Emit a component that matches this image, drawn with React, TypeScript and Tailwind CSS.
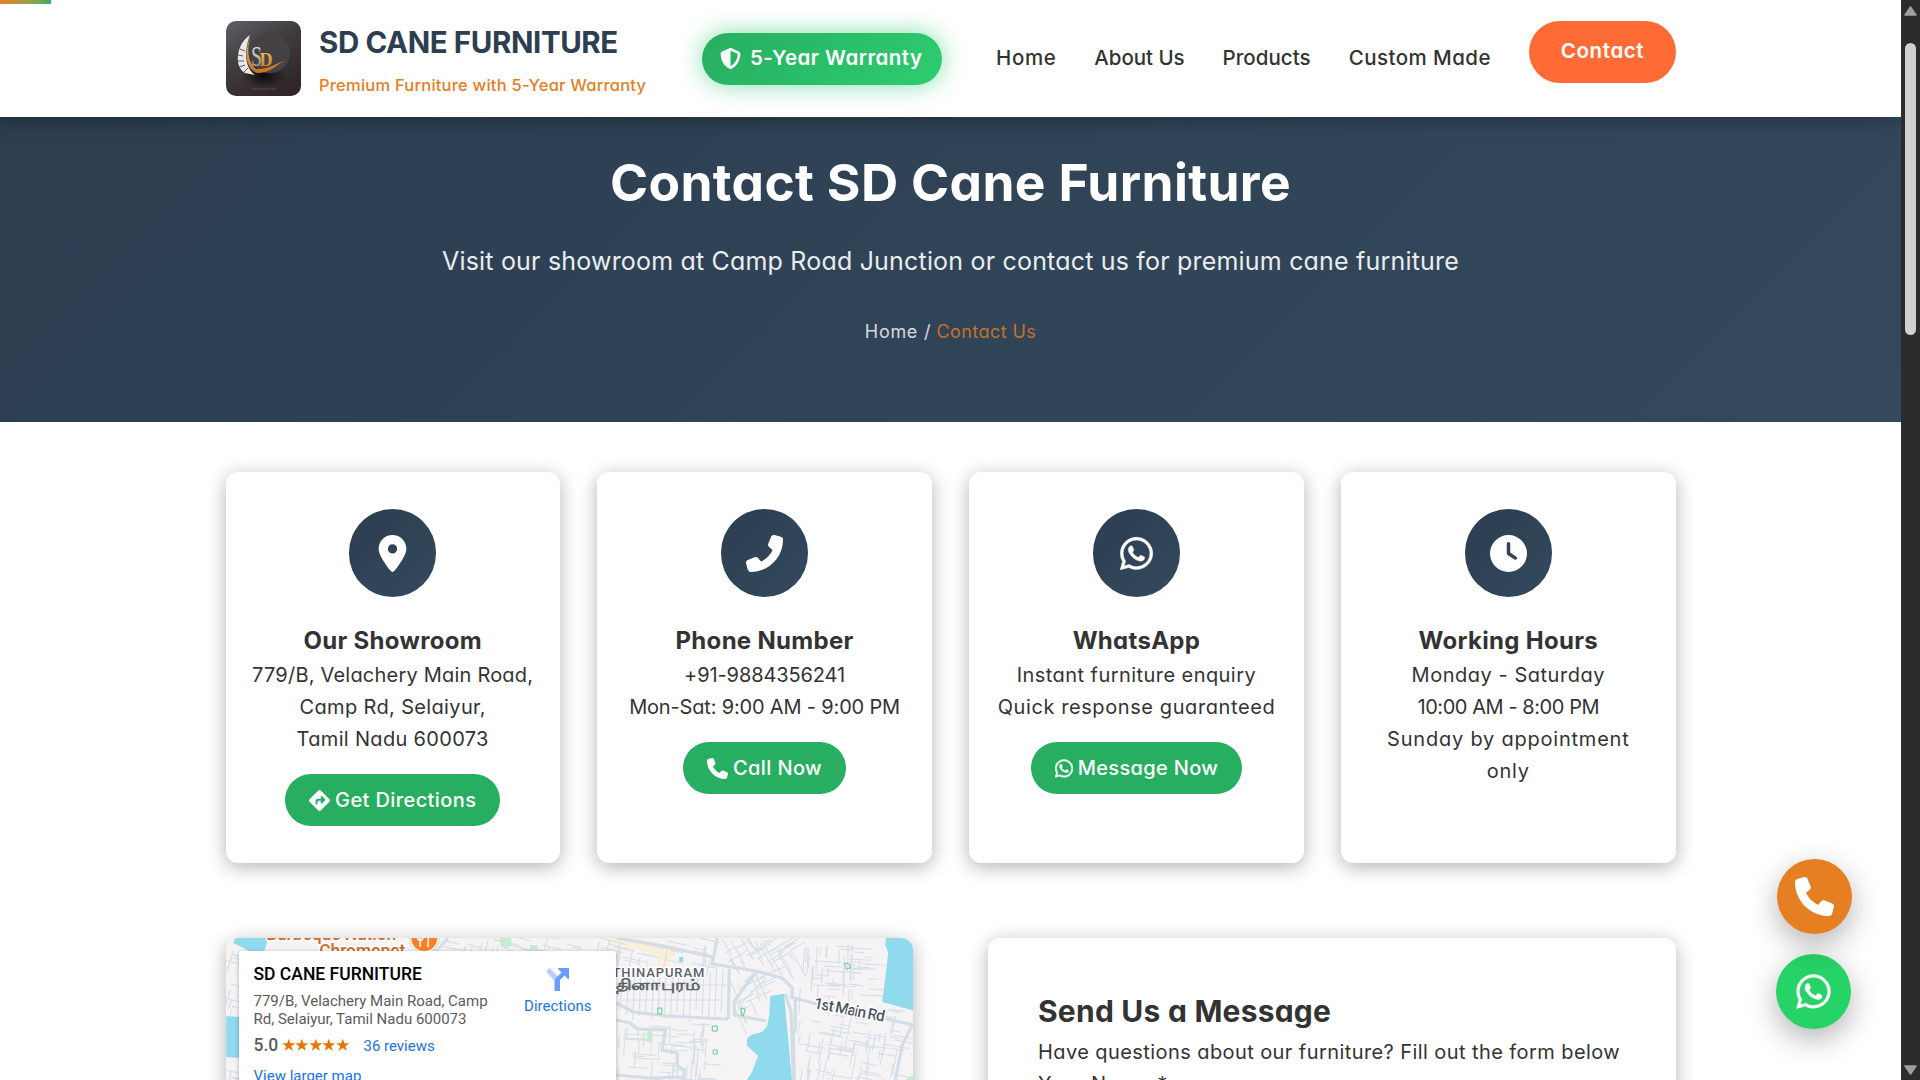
import type { ReactNode } from 'react'
import {
  FaClock,
  FaDiamondTurnRight,
  FaLocationDot,
  FaPhone,
  FaPhoneFlip,
  FaShieldHalved,
  FaWhatsapp,
} from 'react-icons/fa6'

const navLinks = [
  { label: 'Home', tracking: 'tracking-[0.6px]' },
  { label: 'About Us', tracking: 'tracking-[-0.05px]' },
  { label: 'Products', tracking: 'tracking-[0.05px]' },
  { label: 'Custom Made', tracking: 'tracking-[0.45px]' },
]

interface CardProps {
  icon: ReactNode
  title: string
  lines: { text: string; tracking: string }[]
  action?: { icon: ReactNode; label: string; tracking: string }
}

const cards: CardProps[] = [
  {
    icon: <FaLocationDot />,
    title: 'Our Showroom',
    lines: [
      { text: '779/B, Velachery Main Road,', tracking: 'tracking-[0.21px]' },
      { text: 'Camp Rd, Selaiyur,', tracking: 'tracking-[0.35px]' },
      { text: 'Tamil Nadu 600073', tracking: 'tracking-[0.33px]' },
    ],
    action: { icon: <FaDiamondTurnRight className="text-[21px]" />, label: 'Get Directions', tracking: 'tracking-[0.4px]' },
  },
  {
    icon: <FaPhoneFlip />,
    title: 'Phone Number',
    lines: [
      { text: '+91-9884356241', tracking: 'tracking-[-0.11px]' },
      { text: 'Mon-Sat: 9:00 AM - 9:00 PM', tracking: 'tracking-[-0.17px]' },
    ],
    action: { icon: <FaPhone className="text-[21px]" />, label: 'Call Now', tracking: 'tracking-[0.4px]' },
  },
  {
    icon: <FaWhatsapp strokeWidth={8} />,
    title: 'WhatsApp',
    lines: [
      { text: 'Instant furniture enquiry', tracking: 'tracking-[0.44px]' },
      { text: 'Quick response guaranteed', tracking: 'tracking-[0.59px]' },
    ],
    action: { icon: <FaWhatsapp strokeWidth={10} className="h-[21px] w-[18px]" />, label: 'Message Now', tracking: 'tracking-[0.34px]' },
  },
  {
    icon: <FaClock />,
    title: 'Working Hours',
    lines: [
      { text: 'Monday - Saturday', tracking: 'tracking-[0.53px]' },
      { text: '10:00 AM - 8:00 PM', tracking: 'tracking-[-0.44px]' },
      { text: 'Sunday by appointment only', tracking: 'tracking-[0.78px]' },
    ],
  },
]

function Logo() {
  return (
    <svg className="h-[75px] w-[75px] rounded-[10px]" viewBox="0 0 75 75">
      <defs>
        <linearGradient id="logoBg" x1="0" y1="0" x2="0.6" y2="1">
          <stop offset="0" stopColor="#5f6064" />
          <stop offset="0.5" stopColor="#3f3b3e" />
          <stop offset="1" stopColor="#31272a" />
        </linearGradient>
        <linearGradient id="gold" x1="0" y1="0" x2="0" y2="1">
          <stop offset="0" stopColor="#f7c64e" />
          <stop offset="1" stopColor="#c9701c" />
        </linearGradient>
        <linearGradient id="silver" x1="0" y1="0" x2="0" y2="1">
          <stop offset="0" stopColor="#f2f2f2" />
          <stop offset="1" stopColor="#8b8b8b" />
        </linearGradient>
        <radialGradient id="shade">
          <stop offset="0" stopColor="#0c0a0b" />
          <stop offset="1" stopColor="#0c0a0b" stopOpacity="0" />
        </radialGradient>
      </defs>
      <rect width="75" height="75" fill="url(#logoBg)" />
      <ellipse cx="38" cy="55" rx="22" ry="12" fill="url(#shade)" />
      <circle cx="44" cy="32" r="20" fill="#454245" />
      <path d="M24 14C11 22 7 45 19 52l10 2c-9-6-12-22-5-40z" fill="#e8e8e8" />
      <path d="M14 28l5 2M12 34l5 1M12 40l6 0M13 46l6-2M18 51l4-4" stroke="#4b484a" strokeWidth="0.9" />
      <path d="M25 14c-5 14-3 27 5 34 11 1 19-5 31-9-11 4-15 13-30 13C19 47 18 30 25 14z" fill="url(#gold)" />
      <text x="25" y="45" fontFamily="Liberation Serif" fontSize="29" fill="url(#silver)" textLength="11" lengthAdjust="spacingAndGlyphs">S</text>
      <text x="33.500" y="45" fontFamily="Liberation Serif" fontSize="18" fontWeight="700" fill="url(#gold)">D</text>
      <path d="M26 68h24" stroke="#5d5557" strokeWidth="1.400" strokeDasharray="1.200 1.300" />
    </svg>
  )
}

function Header() {
  return (
    <header className="relative z-10 flex h-[117px] items-center bg-white pl-[226px] pr-[225px] shadow-[0_4px_18px_rgba(0,0,0,0.3)]">
      <div className="absolute left-0 top-0 h-1 w-[51px] bg-linear-to-r from-[#e67e22] to-[#27ae60]" />
      <Logo />
      <div className="ml-[18px] mt-[3px] flex w-[383px] flex-col gap-[10px] whitespace-nowrap pb-px">
        <span className="text-[29.500px] font-bold leading-10 tracking-[-0.4px] text-[#2c3e50]">SD CANE FURNITURE</span>
        <span className="text-[16.500px] font-medium leading-[26px] tracking-[0.22px] text-[#e67e22]">
          Premium Furniture with 5-Year Warranty
        </span>
      </div>
      <div className="flex h-[52px] w-[240px] items-center gap-[9px] whitespace-nowrap rounded-full bg-linear-135 from-[#27ae60] to-[#2ecc71] pl-[18px] text-[20.500px] font-semibold tracking-[0.46px] text-white shadow-[0_0_25px_rgba(46,204,113,0.6)]">
        <FaShieldHalved className="text-[21px]" />
        5-Year Warranty
      </div>
      <nav className="ml-auto flex items-center gap-[38px] whitespace-nowrap text-[20.500px] font-medium text-[#333]">
        {navLinks.map((link) => (
          <a key={link.label} className={link.tracking}>
            {link.label}
          </a>
        ))}
        <a className="mb-[14px] flex h-[62px] w-[147px] items-center justify-center rounded-full bg-[#ff6b35] font-semibold tracking-[0.6px] text-white">
          Contact
        </a>
      </nav>
    </header>
  )
}

function Hero() {
  return (
    <section className="flex h-[305px] flex-col items-center bg-linear-135 from-[#2c3e50] to-[#34495e] pt-[35px] text-white">
      <h1 className="text-[51.500px] font-bold leading-[60px] tracking-[0.37px]">Contact SD Cane Furniture</h1>
      <p className="mt-[29px] text-[25px] leading-10 tracking-[0.19px] opacity-90">
        Visit our showroom at Camp Road Junction or contact us for premium cane furniture
      </p>
      <div className="mt-9 flex gap-[6px] text-lg leading-[30px] opacity-80">
        <span className="tracking-[0.7px]">Home</span>
        <span>/</span>
        <span className="tracking-[0.42px] text-[#e67e22]">Contact Us</span>
      </div>
    </section>
  )
}

function InfoCard({ icon, title, lines, action }: CardProps) {
  return (
    <div className="flex h-[391px] flex-col items-center rounded-xl bg-white px-6 pt-[37px] text-center shadow-[0_4px_19px_rgba(0,0,0,0.3)]">
      <div className="flex h-[88px] w-[87px] items-center justify-center rounded-full bg-linear-135 from-[#2c3e50] to-[#34495e] text-[37px] text-white">
        {icon}
      </div>
      <h3 className="mt-[26px] text-2xl font-bold leading-9 tracking-[0.3px]">{title}</h3>
      <div className="text-xl leading-8">
        {lines.map((line) => (
          <p key={line.text} className={line.tracking}>
            {line.text}
          </p>
        ))}
      </div>
      {action && (
        <a className="mt-[19px] flex h-[52px] items-center gap-[5px] rounded-full bg-[#27ae60] px-6 text-xl font-medium text-white">
          {action.icon}
          <span className={action.tracking}>{action.label}</span>
        </a>
      )}
    </div>
  )
}

// Side streets: short segments scattered over a block of the map, slanted by `tilt`
function streets(x: number, y: number, w: number, h: number, count: number, seed: number, tilt: number) {
  let s = seed
  const next = () => {
    s = (s * 16807) % 2147483647
    return s / 2147483647
  }
  let d = ''
  for (let i = 0; i < count; i++) {
    const px = Math.round(x + next() * w)
    const py = Math.round(y + next() * h)
    const len = Math.round(8 + next() * 20)
    const slope = len * tilt
    d += i % 2 ? `M${px} ${py}l${len} ${slope.toFixed(1)}` : `M${px} ${py}l${(-slope).toFixed(1)} ${len}`
  }
  return d
}

const verticalStreets = Array.from({ length: 17 }, (_, i) => `M${622 + i * 6.3} ${966 + (i % 3) * 3}l-2 ${44 + (i % 4) * 2}`).join('')

const sideStreets = [
  streets(420, 936, 200, 14, 40, 71, 0.25),
  streets(620, 938, 90, 26, 24, 11, 0.22),
  streets(722, 938, 70, 26, 34, 23, -0.6),
  streets(800, 938, 70, 58, 60, 37, 0.05),
  streets(798, 1008, 100, 75, 90, 53, 0.18),
  streets(618, 1022, 90, 60, 75, 97, 0.06),
  streets(730, 972, 30, 40, 18, 131, -0.45),
  streets(222, 950, 12, 66, 14, 41, 0.3),
  streets(222, 1060, 12, 20, 6, 43, 0.2),
].join('')

function MapCanvas() {
  return (
    <svg className="h-full w-full" viewBox="226 938 687 142" fill="none">
      <rect x="226" y="938" width="687" height="142" fill="#f5f3f4" />
      <path d="M608 938h30l14 6 24 2v8l-8 6v14h-11v-18l-24-8-24-4z" fill="#f9efda" />
      <path d={verticalStreets + sideStreets} stroke="#d6dfe7" strokeWidth="1.100" />
      <path d="M616 985h110M622 1000h100M735 1000l24-30M740 1004l26-26" stroke="#d6dfe7" strokeWidth="1.200" />
      <path d="M752 1034l-22 0-14 46h34l8-9 5-15-10-10z" fill="#f5f3f4" />
      <path
        d="M616 938l47 8 49 11M717 938l-5 26 44 7 26 7 10 10v9M756 971l-22 30v14l32 6M790 997l23 6 100 22M795 998v32l-2 4 1 46M785 994l6 18 2 68M616 1003l17 9 34 4 61 3M729 969l-1 50M616 1020l14 3 7 6 28 1-3 20 15 3v13l7 4-1 10M616 1075l34 3 34-1M912 1025l-10 20-7 35M436 951l12-13"
        stroke="#d3dde5"
        strokeWidth="3.200"
        strokeLinejoin="round"
      />
      <path d="M885.700 938H913v72.500L882 1002l6-49-3-8z" fill="#90daee" />
      <path
        d="M770 996l13.700-2.300 8 86.300h-45l5.300-8.300 5.700-16-11-10V1039l4-4 11-3 5.300-6 2-11z"
        fill="#90daee"
      />
      <path d="M235 938h30l2 4-3 9h-15l-16-8z" fill="#90daee" />
      <path d="M226 1016l13 1v41l-13-1z" fill="#90daee" />
      <path d="M679 957h4v5h-4z" fill="#90daee" />
      <path d="M500 938h11v8l-5 3-6-3zM530 945h7v6h-7zM647 1031h5v12l-5-1zM905 1080l8-5v5z" fill="#c3ecd0" />
      <path d="M657.500 1008h4v6h-4zM741 1008l4 1-2 7-2-1zM712 1026h5v5h-5zM713 1050h4v4h-4zM844 963l5 1 1 4-4 1z" stroke="#5fcf93" strokeWidth="1" />

      <g fontFamily="Roboto" fontWeight="500" paintOrder="stroke" stroke="#fff" strokeWidth="3" strokeLinejoin="round">
        <text x="266" y="940" fontSize="17.500" fill="#cc6a2c" textLength="130">Barbeque Nation</text>
        <text x="319" y="957" fontSize="17.500" fill="#cc6a2c" textLength="86">Chromepet</text>
        <text x="705" y="977" fontSize="13" fill="#5b6166" letterSpacing="0.900" textAnchor="end">HASTHINAPURAM</text>
        <text x="813" y="1008" fontSize="15.500" fill="#4a5560" textLength="72" transform="rotate(11 813 1008)">1st Main Rd</text>
      </g>
      <text
        x="572"
        y="990"
        fontFamily="Noto Sans, sans-serif"
        fontSize="15"
        fill="#5b6166"
        stroke="#5b6166"
        strokeWidth="0.600"
        textLength="128"
        lengthAdjust="spacingAndGlyphs"
      >
        ஹஸ்தினாபுரம்
      </text>

      <circle cx="424" cy="938" r="15" fill="#fff" stroke="#c9c9c9" strokeWidth="0.800" />
      <circle cx="424" cy="938" r="13" fill="#ff7f27" />
      <path d="M420 936v11M428 936v11M417.500 936v3q2.500 3 5 0v-3" stroke="#fff" strokeWidth="1.600" />
    </svg>
  )
}

function Star() {
  return (
    <svg className="h-[14px] w-[13.600px]" viewBox="0 0 24 24" fill="#e77600">
      <path d="M12 .8l2.900 8h8.500l-6.800 5.200 2.500 8.300L12 17.300l-7.100 5 2.500-8.300L.6 8.800h8.500z" />
    </svg>
  )
}

function MapPanel() {
  return (
    <div className="relative h-[500px] overflow-hidden rounded-xl font-['Roboto'] shadow-[0_4px_19px_rgba(0,0,0,0.3)]">
      <div className="h-[142px]">
        <MapCanvas />
      </div>
      <div className="absolute left-[13px] top-[13px] flex h-[200px] w-[377px] justify-between rounded-[2px] bg-white pl-[15px] pr-[24px] shadow-[0_1px_4px_rgba(0,0,0,0.3)]">
        <div className="whitespace-nowrap pt-3">
          <p className="text-[17.500px] font-medium leading-[22px] text-black">SD CANE FURNITURE</p>
          <p className="mt-[7px] text-[15px] leading-[18px] text-[#5b5b5b]">
            779/B, Velachery Main Road, Camp
            <br />
            Rd, Selaiyur, Tamil Nadu 600073
          </p>
          <div className="mt-[6px] flex items-center leading-5">
            <span className="w-[28px] text-[17.500px] font-medium text-[#5b5b5b]">5.0</span>
            <span className="flex">
              {[1, 2, 3, 4, 5].map((n) => (
                <Star key={n} />
              ))}
            </span>
            <a className="ml-[14px] mt-[2px] text-[15px] text-[#1a73e8]">36 reviews</a>
          </div>
          <a className="mt-[10px] block text-[15px] leading-5 text-[#1a73e8]">View larger map</a>
        </div>
        <div className="flex flex-col items-center pt-[17px]">
          <svg className="h-[23px] w-[23px]" viewBox="0 0 23 23">
            <path d="M0 3.500L3.500 0l10 10-4 4z" fill="#b7cffc" />
            <path d="M8.500 23V13.500Q8.500 11.500 10 10L15.500 4.500 12 1V0h11v11h-1l-3.500-3.500-4.500 4.500V23z" fill="#6a9dfb" />
          </svg>
          <a className="mt-[5px] text-[15px] leading-5 text-[#1a73e8]">Directions</a>
        </div>
      </div>
    </div>
  )
}

function MessageForm() {
  return (
    <div className="h-[500px] rounded-xl bg-white px-[50px] pt-[53px] shadow-[0_4px_19px_rgba(0,0,0,0.3)]">
      <h2 className="text-[30px] font-bold leading-10 tracking-[0.23px]">Send Us a Message</h2>
      <p className="mt-[5px] text-xl leading-8 tracking-[0.42px]">
        Have questions about our furniture? Fill out the form below
      </p>
      <label className="block text-xl leading-8 tracking-[0.8px]">Your Name *</label>
    </div>
  )
}

function Scrollbar() {
  return (
    <div className="flex h-full w-[19px] flex-col items-center bg-[#2c2c2c]">
      <svg className="mt-[6px] h-[10px] w-[13px]" viewBox="0 0 13 10">
        <path d="M6.500 1L12 9H1z" fill="#9f9f9f" stroke="#9f9f9f" strokeWidth="1.500" strokeLinejoin="round" />
      </svg>
      <div className="mt-[27px] h-[292px] w-[11px] rounded-full bg-[#d1d1d1]" />
      <svg className="mb-[5px] mt-auto h-[10px] w-[13px]" viewBox="0 0 13 10">
        <path d="M6.500 9L12 1H1z" fill="#9f9f9f" stroke="#9f9f9f" strokeWidth="1.500" strokeLinejoin="round" />
      </svg>
    </div>
  )
}

export default function App() {
  return (
    <div className="relative flex h-[1080px] w-[1920px] overflow-hidden bg-white font-['Inter',sans-serif] text-[#333] [font-feature-settings:'cv11']">
      <div className="h-full w-[1901px] overflow-hidden">
        <Header />
        <Hero />
        <main className="px-[225.500px] pt-[50px]">
          <div className="grid grid-cols-4 gap-[37.500px]">
            {cards.map((card) => (
              <InfoCard key={card.title} {...card} />
            ))}
          </div>
          <div className="mt-[75px] grid grid-cols-2 gap-[75px]">
            <MapPanel />
            <MessageForm />
          </div>
        </main>
      </div>
      <Scrollbar />

      {/* Floating contact buttons */}
      <a className="absolute left-[1776px] top-[954px] flex h-[75px] w-[75px] items-center justify-center rounded-full bg-[#25d366] text-[39px] text-white shadow-[0_10px_30px_rgba(0,0,0,0.3)]">
        <FaWhatsapp strokeWidth={5} />
      </a>
      <a className="absolute left-[1777px] top-[859px] flex h-[75px] w-[75px] items-center justify-center rounded-full bg-[#e67e22] text-[39px] text-white shadow-[0_10px_30px_rgba(0,0,0,0.3)]">
        <FaPhone />
      </a>
    </div>
  )
}
